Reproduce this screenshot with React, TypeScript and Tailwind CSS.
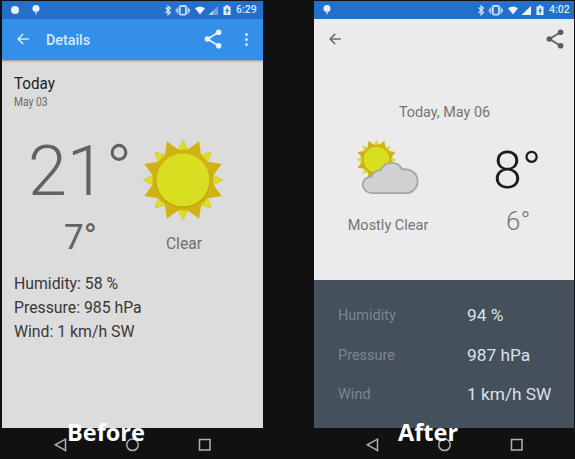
import React from "react";

function StatusIcons({ weak }: { weak?: boolean }) {
  return (
    <svg className="block h-[18px] w-[72px]" viewBox="0 0 72 18" fill="none">
      <path d="M1.5 6.5 L6.5 11.5 L4 13.7 V5 L6.5 7 L1.5 12" stroke="#d3e3f7" strokeWidth="1.2" />
      <rect x="15.8" y="5" width="6.2" height="8.6" rx="1" stroke="#c5daf4" strokeWidth="1.9" />
      <path d="M13.6 6.5 V12.5 M24.2 6.5 V12.5" stroke="#a9c9ef" strokeWidth="1.6" />
      <path d="M12.3 8 V11 M25.5 8 V11" stroke="#a9c9ef" strokeWidth="1.2" />
      <path d="M31 7.2 Q36 3.6 41 7.2 L36 13.5 Z" fill="#eef5ff" />
      <path d="M44.5 14 L54 5 V14 Z" fill={weak ? "#6fa2df" : "#eef5ff"} />
      {weak && <path d="M44.5 14 L49 9.8 V14 Z" fill="#b5d0f2" />}
      <path d="M59.5 5.5 H61.5 V4.3 H64.5 V5.5 H66.5 V14 H59.5 Z" fill="#e6f0fd" />
      <path d="M63.6 6.8 L61.5 10 H63 L62.6 12.8 L64.7 9.3 H63.2 Z" fill="#2470c8" stroke="#2470c8" strokeWidth=".5" />
    </svg>
  );
}

function Pin() {
  return (
    <svg className="block h-[18px] w-2" viewBox="0 0 8 18">
      <circle cx="4" cy="7.5" r="3.5" fill="#e9f2fd" />
      <path d="M2.6 9.5 L4 14.5 L5.4 9.5 Z" fill="#bcd6f5" />
      <circle cx="4" cy="7" r="1" fill="#d6e6f8" />
    </svg>
  );
}

function BackArrow({ color }: { color: string }) {
  return (
    <svg className="-mt-[2px] block h-3 w-3" viewBox="0 0 12 12" fill="none" stroke={color} strokeWidth="1.5">
      <path d="M11.8 6 H1.2 M6.2 .9 L1.1 6 L6.2 11.1" />
    </svg>
  );
}

function ShareIcon({ color }: { color: string }) {
  return (
    <svg className="-mt-[2px] block h-5 w-[18px]" viewBox="0 0 18 20" fill={color}>
      <path d="M14.5 3.3 L3.5 10 L14.5 16.7" fill="none" stroke={color} strokeWidth="1.7" />
      <circle cx="14.6" cy="3.3" r="2.8" />
      <circle cx="3.4" cy="10" r="2.8" />
      <circle cx="14.6" cy="16.7" r="2.8" />
    </svg>
  );
}

const bigRays = [22.5, 67.5, 112.5, 157.5, 202.5, 247.5, 292.5, 337.5];
const smallRays = [0, 45, 90, 135, 180, 225, 270, 315];

function SunShape() {
  return (
    <g>
      {smallRays.map((a) => (
        <path key={a} d="M-5 -30 L0 -39.8 L5 -30 Z" fill="#dde01c" stroke="#c3bd1c" strokeWidth=".5" transform={`rotate(${a})`} />
      ))}
      {bigRays.map((a) => (
        <path key={a} d="M-9 -27 L0 -42 L9 -27 Z" fill="#d0b214" transform={`rotate(${a})`} />
      ))}
      <circle r="30.5" fill="#d0b214" />
      <circle cy=".8" r="27" fill="#b9a116" />
      <circle r="26.5" fill="#d7df20" />
    </g>
  );
}

function CloudySun() {
  return (
    <svg className="block h-[58px] w-16" viewBox="0 0 64 58">
      <g transform="translate(20.5 20.8) scale(.49)">
        <SunShape />
      </g>
      <path
        d="M16.5 54.2 C4 54.2 3.5 38 15.5 37.5 C17.5 33 20 31 24.5 31.3 C29 21.5 42 21.5 46 30.3 C57 29.5 62 36 61.5 43 C61 50 56 54.2 49 54.2 Z"
        fill="#d1d1d1" stroke="#a5a5a5" strokeWidth="1.8"
      />
    </svg>
  );
}

function NavBar() {
  return (
    <div className="flex h-8 items-center pl-[50px]">
      <svg className="block h-4 w-[162px]" viewBox="0 0 162 16" fill="none" stroke="#b2b2b2" strokeWidth="1.5">
        <path d="M13.5 3.2 V14.4 L3.3 8.8 Z" />
        <circle cx="80.5" cy="8.8" r="5.8" />
        <rect x="147.5" y="3.5" width="10.5" height="10.5" />
      </svg>
    </div>
  );
}

function Caption({ children, className }: { children: React.ReactNode; className: string }) {
  return (
    <div className={`absolute top-[418px] whitespace-nowrap font-['Open_Sans','Noto_Sans',sans-serif] text-[23.5px] font-bold leading-[28px] text-white ${className}`}>
      {children}
    </div>
  );
}

function Before() {
  return (
    <section className="relative w-[261px]">
      <div className="flex h-[427px] flex-col bg-[#dcdcdc]">
        <div className="flex h-[18px] shrink-0 items-center bg-[#2470c8] pl-[9px] pr-[6px] text-[#d9e7f8]">
          <div className="mr-[13px] h-2 w-2 rounded-full bg-[#e9f2fd]" />
          <Pin />
          <div className="ml-auto flex items-center">
            <StatusIcons weak />
            <span className="w-[21px] whitespace-nowrap text-[10.5px] font-medium leading-[18px]">6:29</span>
          </div>
        </div>
        <div className="flex h-[41px] shrink-0 items-center bg-[#338fea] pl-[15px] pr-[15px] shadow-[0_1px_2px_rgba(0,0,0,0.35)]">
          <BackArrow color="#cfe4fb" />
          <h1 className="ml-[17px] text-[14.3px] font-medium leading-5 text-[#d8e9fc]">Details</h1>
          <div className="ml-auto flex items-center gap-[23px]">
            <ShareIcon color="#e6f2ff" />
            <div className="-mt-px flex flex-col gap-[2px]">
              <i className="h-[3px] w-[3px] rounded-full bg-[#d3e7fc]" />
              <i className="h-[3px] w-[3px] rounded-full bg-[#d3e7fc]" />
              <i className="h-[3px] w-[3px] rounded-full bg-[#d3e7fc]" />
            </div>
          </div>
        </div>
        <div className="flex flex-col pl-3 pt-[13px]">
          <h2 className="origin-left scale-x-[.88] text-[17.3px] leading-5 text-[#202020]">Today</h2>
          <p className="mt-px origin-left scale-x-[.86] text-[12px] leading-4 text-[#6c6c6c]">May 03</p>
        </div>
        <div className="mt-[30px] flex h-[132px] pl-[26px] text-[#626262]">
          <div className="w-[115px]">
            <div className="mt-px whitespace-nowrap text-[70px] font-light leading-[60px]">21°</div>
            <div className="mt-[17px] pl-9 text-[35px] leading-10">7°</div>
          </div>
          <div className="flex w-20 flex-col items-center">
            <svg className="block h-20 w-20 shrink-0" viewBox="-40 -40 80 80">
              <SunShape />
            </svg>
            <div className="mt-[14px] pl-[2px] text-[15.7px] leading-5 text-[#707070]">Clear</div>
          </div>
        </div>
        <div className="pl-3 text-[15.8px] leading-6 text-[#383838]">
          <p>Humidity: 58 %</p>
          <p>Pressure: 985 hPa</p>
          <p>Wind: 1 km/h SW</p>
        </div>
      </div>
      <NavBar />
    </section>
  );
}

function After() {
  return (
    <section className="relative w-[260px]">
      <div className="flex h-[427px] flex-col bg-[#ebebeb]">
        <div className="flex h-[18px] shrink-0 items-center bg-[#2470c8] pl-[9px] pr-[4px] text-[#d9e7f8]">
          <Pin />
          <div className="ml-auto flex items-center">
            <StatusIcons />
            <span className="w-[21px] whitespace-nowrap text-[10.5px] font-medium leading-[18px]">4:02</span>
          </div>
        </div>
        <div className="flex h-[41px] shrink-0 items-center justify-between pl-[15px] pr-[10px]">
          <BackArrow color="#6d6d6d" />
          <ShareIcon color="#5c5c5c" />
        </div>
        <div className="mt-[43px] pl-px text-center text-[14.4px] leading-5 text-[#747474]">Today, May 06</div>
        <div className="mt-[16px] flex h-[141px] shrink-0">
          <div className="flex w-[148px] flex-col items-center">
            <CloudySun />
            <div className="mt-[19px] text-[14.5px] leading-5 text-[#747474]">Mostly Clear</div>
          </div>
          <div className="flex w-[112px] flex-col pl-[31px]">
            <div className="mt-[2px] text-[52px] font-light leading-[60px] text-[#1c1c1c]">8°</div>
            <div className="mt-[5px] pl-[13px] text-[26px] font-light leading-[30px] text-[#777]">6°</div>
          </div>
        </div>
        <div className="flex flex-1 flex-col bg-[#44505c] pl-6 pt-4">
          {[
            ["Humidity", "94 %"],
            ["Pressure", "987 hPa"],
            ["Wind", "1 km/h SW"],
          ].map(([label, value]) => (
            <div key={label} className="flex h-[39.7px] items-center">
              <span className="w-[129px] text-[14.5px] text-[#7c868f]">{label}</span>
              <span className="whitespace-nowrap text-[17.3px] text-[#dae2ea]">{value}</span>
            </div>
          ))}
        </div>
      </div>
      <NavBar />
    </section>
  );
}

export default function App() {
  return (
    <main className="relative flex h-[459px] w-[575px] gap-[51px] overflow-hidden bg-[#111111] pl-[2px] pt-px font-[Roboto,sans-serif]">
      <Before />
      <After />
      <Caption className="left-[67px]">Before</Caption>
      <Caption className="left-[398px]">After</Caption>
    </main>
  );
}
